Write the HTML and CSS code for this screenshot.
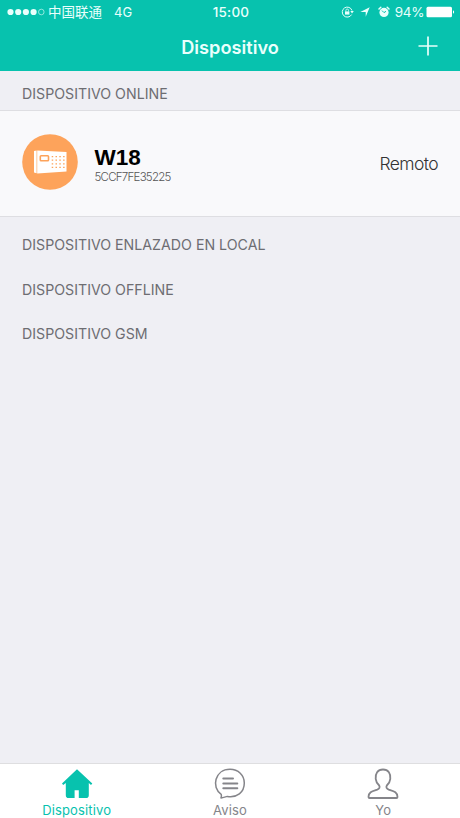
FILE: index.html
```html
<!DOCTYPE html>
<html lang="es">
<head>
    <meta charset="UTF-8">
    <title>Dispositivo</title>
    <link rel="stylesheet" href="styles.css">
</head>
<body>
<div class="app">
    <header class="header">
        <div class="status-bar">
            <div class="status-left">
                <svg class="signal" width="38" height="8" viewBox="0 0 38 8">
                    <circle cx="3.5" cy="4" r="3.1"/>
                    <circle cx="11.2" cy="4" r="3.1"/>
                    <circle cx="18.9" cy="4" r="3.1"/>
                    <circle cx="26.6" cy="4" r="3.1"/>
                    <circle class="empty" cx="34.3" cy="4" r="2.8"/>
                </svg>
                <span class="carrier">中国联通</span>
                <span class="network">4G</span>
            </div>
            <span class="clock">15:00</span>
            <div class="status-right">
                <svg class="lock" width="13" height="12" viewBox="0 0 13 12">
                    <path d="M10.6 8.6A5 5 0 1 1 11 4.500" fill="none" stroke="currentColor"/>
                    <path d="M9.300 5h3.500L11 7.400z" fill="currentColor"/>
                    <path d="M4 5.400h4.400v3.200H4z" fill="currentColor"/>
                    <path d="M4.900 5.500V4.300a1.300 1.300 0 0 1 2.600 0v1.200" fill="none" stroke="currentColor" stroke-width=".8"/>
                </svg>
                <svg class="location" width="10" height="10" viewBox="0 0 10 10">
                    <path d="M9.700.3L5.700 9.700V4.900H.3z" fill="currentColor"/>
                </svg>
                <svg class="alarm" width="12" height="12" viewBox="0 0 12 12">
                    <circle cx="6" cy="6.400" r="4.600" fill="currentColor"/>
                    <path d="M1 3L2.800 1.300M11 3L9.200 1.300" stroke="currentColor" stroke-width="1.500" stroke-linecap="round"/>
                    <path d="M4 4.600l2 2 2-1.300" fill="none" stroke="#07c2ae"/>
                </svg>
                <span class="percent">94%</span>
                <svg class="battery" width="29" height="12" viewBox="0 0 29 12">
                    <rect x=".5" y=".8" width="25.500" height="10.400" rx="1.500" fill="#fff"/>
                    <path d="M27 4.200a2 2 0 0 1 0 3.600z" fill="#fff"/>
                </svg>
            </div>
        </div>
        <div class="nav-bar">
            <h1>Dispositivo</h1>
            <button class="add" aria-label="Agregar">
                <svg width="20" height="20" viewBox="0 0 20 20">
                    <path d="M10 .5v19M.5 10h19" stroke="currentColor" stroke-width="1.700"/>
                </svg>
            </button>
        </div>
    </header>

    <main class="content">
        <h2 class="first">DISPOSITIVO ONLINE</h2>
        <div class="device">
            <svg class="device-icon" width="56" height="56" viewBox="0 0 56 56">
                <circle cx="28" cy="28" r="27.800" fill="#fda35b"/>
                <path d="M12 17l2.600-.5v22.800l-2.600-.8z" fill="#fff"/>
                <path d="M15.200 16.400L44.500 18v19.500l-29.300 1.900z" fill="#fff"/>
                <rect x="18.300" y="21.700" width="8.200" height="5" rx=".8" fill="#fff" stroke="#fda35b" stroke-width="1.600"/>
                <path d="M29.700 22.600h13M29.700 26.200h13M29.700 29.800h13M29.700 33.400h13" stroke="#fda35b" stroke-width="1.200" stroke-dasharray="1.500 2.300"/>
            </svg>
            <div class="device-info">
                <span class="device-name">W18</span>
                <span class="device-id">5CCF7FE35225</span>
            </div>
            <span class="device-mode">Remoto</span>
        </div>
        <h2>DISPOSITIVO ENLAZADO EN LOCAL</h2>
        <h2>DISPOSITIVO OFFLINE</h2>
        <h2>DISPOSITIVO GSM</h2>
    </main>

    <nav class="tab-bar">
        <a class="tab active">
            <svg width="32" height="32" viewBox="0 0 32 32">
                <path d="M16 1.200L1 15.600l1.200 1.400L4.800 15V27.200q0 2.800 2.800 2.800h6v-7.800h4.200V30H25q2.800 0 2.800-2.800V15l2.200 2 1.300-1.400z" fill="currentColor"/>
            </svg>
            <span>Dispositivo</span>
        </a>
        <a class="tab">
            <svg width="32" height="32" viewBox="0 0 32 32" fill="none" stroke="currentColor">
                <path d="M7.200 26.300C-3 19.500.8 1.300 16 1.300c8.300 0 14.300 6 14.300 13.700 0 9.500-7.500 15-17 13.400-2 .6-4 1.200-6.300 1.500q.8-1.800.2-3.600z" stroke-width="1.500" stroke-linejoin="round"/>
                <path d="M9.300 10.600h9.700M9.300 15.400h14M9.300 20.200h14" stroke-width="2" stroke-linecap="round"/>
            </svg>
            <span>Aviso</span>
        </a>
        <a class="tab">
            <svg width="32" height="32" viewBox="0 0 32 32" fill="none" stroke="currentColor">
                <path d="M16 1.500c-5.500 0-7.800 4.300-7.300 9.300.3 3.200 1.700 5 3.500 6.700 1 1.800.2 3.400-2 4.200-4.500 1.500-8.700 2.200-8.700 7.300q0 1 1 1h27q1 0 1-1c0-5.100-4.200-5.800-8.700-7.300-2.200-.8-3-2.400-2-4.200 1.800-1.700 3.200-3.500 3.500-6.700.5-5-1.800-9.300-7.300-9.300z" stroke-width="1.800" stroke-linejoin="round"/>
            </svg>
            <span>Yo</span>
        </a>
    </nav>
</div>
</body>
</html>
```
FILE: styles.css
```css
* {
    box-sizing: border-box;
}

body {
    margin: 0;
    background-color: #efeff4;
    font-family: Inter, "Noto Sans CJK SC", sans-serif;
}

.app {
    display: flex;
    flex-direction: column;
    height: 818px;
}

.header {
    height: 71px;
    background-color: #07c2ae;
    color: #e9fffc;
}

/* status bar */
.status-bar {
    display: grid;
    grid-template-columns: 1fr auto 1fr;
    align-items: center;
    height: 24px;
    padding: 0 5px 0 7px;
    font-size: 13px;
}

.status-left,
.status-right {
    display: flex;
    align-items: center;
}

.status-right {
    justify-content: flex-end;
}

.signal {
    fill: #e9fffc;
}

.signal .empty {
    fill: none;
    stroke: #e9fffc;
    stroke-width: 0.6;
}

.carrier {
    margin: -2px 0 0 3px;
    font-family: "Noto Sans CJK SC", sans-serif;
    font-size: 13.5px;
    line-height: 20px;
}

.network {
    margin-left: 12px;
}

.clock {
    font-size: 13.5px;
    font-weight: 500;
    letter-spacing: 0.2px;
}

.location {
    margin-left: 6px;
}

.alarm {
    margin-left: 8px;
}

.percent {
    margin: 0 2px 0 5px;
    font-size: 13.5px;
    letter-spacing: -0.4px;
}

/* title bar */
.nav-bar {
    display: grid;
    grid-template-columns: 1fr auto 1fr;
    align-items: center;
    height: 46px;
    padding: 0 22px;
}

.nav-bar h1 {
    grid-column: 2;
    margin: 0;
    font-size: 18.2px;
    font-weight: 600;
}

.add {
    display: flex;
    justify-self: end;
    padding: 0 0 2px;
    border: none;
    background: none;
    color: #e9fffc;
}

/* device list */
.content {
    flex: 1;
}

.content h2 {
    height: 44.5px;
    margin: 0;
    padding: 19px 22px 0;
    color: #6d6d72;
    font-size: 14.2px;
    font-weight: 400;
    line-height: 18px;
}

.content h2.first {
    height: 39px;
    padding-top: 14px;
}

.device {
    display: flex;
    align-items: center;
    height: 107px;
    padding: 0 22px;
    border-top: 1px solid #dedee2;
    border-bottom: 1px solid #dedee2;
    background-color: #f9f9fb;
}

.device-icon {
    margin-bottom: 3px;
}

.device-info {
    display: flex;
    flex-direction: column;
    flex: 1;
    margin: 2px 0 0 16.5px;
}

.device-name {
    color: #000;
    font-family: "Liberation Sans", Arial, sans-serif;
    font-size: 22.5px;
    font-weight: bold;
    line-height: 25px;
}

.device-id {
    color: #555;
    font-size: 11.5px;
    font-weight: 300;
    letter-spacing: -0.75px;
    line-height: 14px;
}

.device-mode {
    color: #333;
    font-size: 17.5px;
    font-weight: 300;
    letter-spacing: -0.6px;
}

/* bottom tabs */
.tab-bar {
    display: grid;
    grid-template-columns: repeat(3, 1fr);
    height: 55px;
    padding-top: 4px;
    border-top: 1px solid #dedee0;
    background-color: #fff;
}

.tab {
    display: flex;
    flex-direction: column;
    align-items: center;
    color: #85858a;
    font-size: 13px;
    letter-spacing: 0.15px;
    line-height: 16px;
}

.tab span {
    margin-top: 2px;
}

.tab.active {
    color: #07c2ae;
}
```
